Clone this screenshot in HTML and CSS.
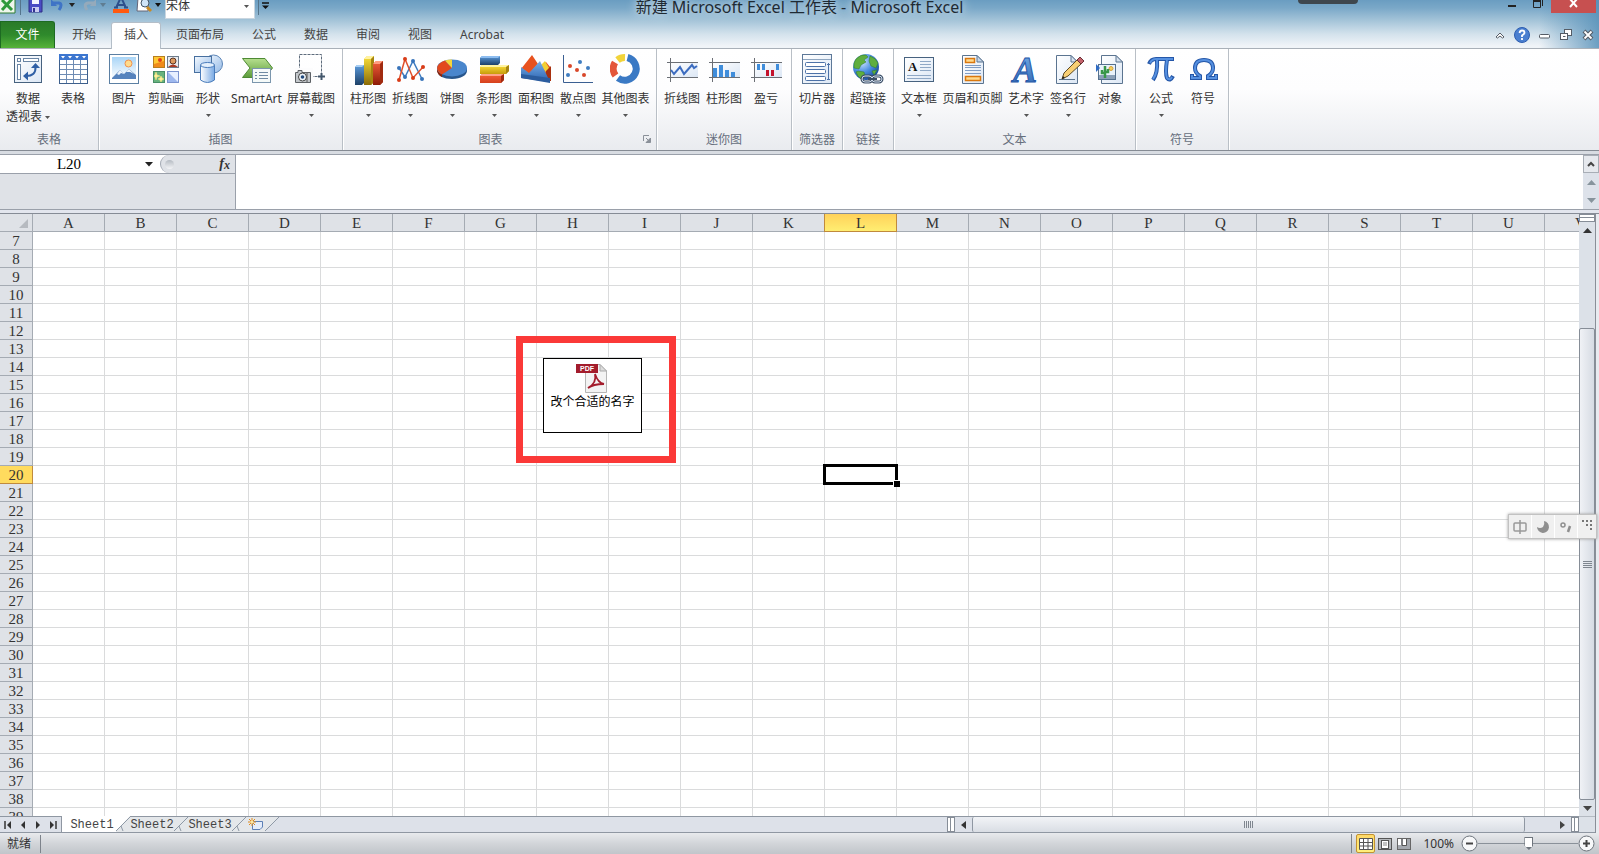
FILE: index.html
```html
<!DOCTYPE html>
<html lang="zh-CN">
<head>
<meta charset="utf-8">
<title>新建 Microsoft Excel 工作表 - Microsoft Excel</title>
<link rel="stylesheet" href="styles.css">
</head>
<body>
<svg class="defs" aria-hidden="true">
  <defs>
    <linearGradient id="gBlue" x1="0" y1="0" x2="0" y2="1"><stop offset="0" stop-color="#79b0ea"/><stop offset="1" stop-color="#2a62ae"/></linearGradient>
    <linearGradient id="gBlueBar" x1="0" y1="0" x2="0" y2="1"><stop offset="0" stop-color="#5c9bdc"/><stop offset="1" stop-color="#1d4067"/></linearGradient>
    <linearGradient id="gYellow" x1="0" y1="0" x2="0" y2="1"><stop offset="0" stop-color="#fbe13c"/><stop offset="1" stop-color="#8a6a06"/></linearGradient>
    <linearGradient id="gRed" x1="0" y1="0" x2="0" y2="1"><stop offset="0" stop-color="#f4603c"/><stop offset="1" stop-color="#8c1a06"/></linearGradient>
    <linearGradient id="gYellowH" x1="0" y1="0" x2="0" y2="1"><stop offset="0" stop-color="#fbe13c"/><stop offset="1" stop-color="#c79c0c"/></linearGradient>
    <linearGradient id="gRedH" x1="0" y1="0" x2="0" y2="1"><stop offset="0" stop-color="#f4603c"/><stop offset="1" stop-color="#d5401c"/></linearGradient>
    <linearGradient id="gPaper" x1="0" y1="0" x2="1" y2="1"><stop offset="0" stop-color="#ffffff"/><stop offset="1" stop-color="#dce7f5"/></linearGradient>
    <linearGradient id="gSky" x1="0" y1="0" x2="0" y2="1"><stop offset="0" stop-color="#a9d5f7"/><stop offset="1" stop-color="#ffffff"/></linearGradient>
    <linearGradient id="gShape" x1="0" y1="0" x2="1" y2="1"><stop offset="0" stop-color="#f5faff"/><stop offset="1" stop-color="#93b9e6"/></linearGradient>
    <linearGradient id="gCyl" x1="0" y1="0" x2="1" y2="0"><stop offset="0" stop-color="#ffffff"/><stop offset="1" stop-color="#78a9e4"/></linearGradient>
    <linearGradient id="gGreen" x1="0" y1="0" x2="0" y2="1"><stop offset="0" stop-color="#b6df8e"/><stop offset="1" stop-color="#5c9c3a"/></linearGradient>
    <radialGradient id="gGlobe" cx=".35" cy=".3" r=".8"><stop offset="0" stop-color="#cfe6ff"/><stop offset=".5" stop-color="#4b8ee0"/><stop offset="1" stop-color="#123f8f"/></radialGradient>
  </defs>
</svg>

<header class="chrome">
  <div class="titlebar">
    <div class="qat">
      <svg width="17" height="20"><path d="M-1-2H15V13H-1z" fill="#eef6ec" stroke="#2e7d32"/><path d="M2 0L12 10M12-1L2 10" stroke="#2f9a3b" stroke-width="3"/></svg>
      <i class="qat-sep"></i>
      <button class="qb save" aria-label="保存"><svg width="16" height="16"><path d="M1-2H14V12H1z" fill="#4a4cc4" stroke="#2e2f86"/><path d="M4-2H11V4H4z" fill="#f4f6ff"/><path d="M4 7H11V12H4z" fill="#c9ccf2"/><path d="M5 8H7V12H5z" fill="#33348f"/></svg></button>
      <button class="qb undo" aria-label="撤消"><svg width="14" height="16"><path d="M2 3H8Q12 4 8 10" fill="none" stroke="#3f74c6" stroke-width="3"/><path d="M0-1V6H6z" fill="#3f74c6"/></svg></button>
      <svg class="tri" width="6" height="4"><path d="M0 0H6L3 4z" fill="#222"/></svg>
      <button class="qb redo" aria-label="恢复"><svg width="14" height="16"><path d="M12 3H6Q1 4 5 10" fill="none" stroke="#95aabb" stroke-width="3"/><path d="M14-1V6H8z" fill="#95aabb"/></svg></button>
      <svg class="tri" width="6" height="4"><path d="M0 0H6L3 4z" fill="#5f7d92"/></svg>
      <button class="qb color" aria-label="字体颜色"><svg width="18" height="16"><path d="M4 8L9-3L14 8M6 5H12M2 7.500H6M12 7.500H16" fill="none" stroke="#2d4f8c" stroke-width="2"/><path d="M1 9H17V13H1z" fill="#ff5a10"/></svg></button>
      <button class="qb preview" aria-label="打印预览"><svg width="18" height="16"><path d="M2-2H12V11H1z" fill="#fff" stroke="#667"/><circle cx="9" cy="3" r="4" fill="#cfe4f7" stroke="#456"/><path d="M11 7L15 11" stroke="#c98a22" stroke-width="3"/></svg></button>
      <svg class="tri" width="6" height="4"><path d="M0 0H6L3 4z" fill="#111"/></svg>
      <label class="fontbox"><select aria-label="字体"><option>宋体</option></select><svg width="5" height="3"><path d="M0 0H5L2.500 3z" fill="#555"/></svg></label>
      <i class="qat-sep"></i>
      <button class="qb" aria-label="自定义快速访问工具栏"><svg width="8" height="16"><path d="M0 3H7" stroke="#111" stroke-width="1.500"/><path d="M0 5.500H7L3.500 9z" fill="#111"/></svg></button>
    </div>
    <h1 class="title">新建 Microsoft Excel 工作表 - Microsoft Excel</h1>
    <div class="winctl">
      <i class="dock"></i>
      <button class="wc" aria-label="最小化"><svg width="26" height="13"><path d="M9 6H17" stroke="#222" stroke-width="2"/></svg></button>
      <button class="wc" aria-label="还原"><svg width="26" height="13"><path d="M8.500 1H15.500V7.500H8.500zM17.500 0V6" fill="none" stroke="#222"/><path d="M8 1H16" stroke="#222" stroke-width="2"/></svg></button>
      <button class="wc close" aria-label="关闭"><svg width="45" height="13"><path d="M19-1L26 7M26-1L19 7" stroke="#fff" stroke-width="2"/></svg></button>
    </div>
  </div>
  <nav class="tabs">
    <button class="file">文件</button>
    <button class="tab">开始</button>
    <button class="tab active">插入</button>
    <button class="tab">页面布局</button>
    <button class="tab">公式</button>
    <button class="tab">数据</button>
    <button class="tab">审阅</button>
    <button class="tab">视图</button>
    <button class="tab">Acrobat</button>
    <div class="docctl">
      <button aria-label="功能区最小化"><svg width="22" height="22"><path d="M7 13L11 9L15 13L13.500 14L11 12L8.500 14z" fill="#fff" stroke="#555c66"/></svg></button>
      <button aria-label="帮助"><svg width="22" height="22"><circle cx="11" cy="11" r="7.500" fill="#4a7fd0" stroke="#2c5db0"/><path d="M8.500 9Q9 6.500 11 6.500Q13.500 6.500 13.500 8.800Q13.500 10 11 11.500V13M11 14V16" fill="none" stroke="#fff" stroke-width="1.800"/></svg></button>
      <button aria-label="最小化窗口"><svg width="22" height="22"><rect x="6.500" y="10.500" width="10" height="3.500" rx="1" fill="#fff" stroke="#555c66"/></svg></button>
      <button aria-label="还原窗口"><svg width="22" height="22"><rect x="9.500" y="5.500" width="7" height="6" fill="#fff" stroke="#555c66"/><rect x="5.500" y="9.500" width="7" height="6" fill="#fff" stroke="#555c66"/><path d="M8 12.500H10.500" stroke="#555c66"/></svg></button>
      <button aria-label="关闭窗口"><svg width="22" height="22"><path d="M7 7L15 15M15 7L7 15" stroke="#555c66" stroke-width="4"/><path d="M7.500 7.500L14.500 14.500M14.500 7.500L7.500 14.500" stroke="#fff" stroke-width="1.800"/></svg></button>
    </div>
  </nav>
</header>

<section class="ribbon">
  <div class="group">
    <div class="items">
      <button class="rb w48"><svg width="32" height="32"><rect x="2.500" y="2.500" width="27" height="27" fill="url(#gPaper)" stroke="#47627f"/><rect x="5.500" y="5.500" width="3" height="3" fill="#fff" stroke="#6884a4"/><rect x="11.500" y="5.500" width="15" height="3" fill="#fff" stroke="#6884a4"/><rect x="5.500" y="11.500" width="3" height="15" fill="#fff" stroke="#6884a4"/><path d="M14 23Q24 23 23.500 14" fill="none" stroke="#2f5fa5" stroke-width="2"/><path d="M23.500 10L28 15H19zM11 23L16 18.500V27.500z" fill="#2f5fa5"/></svg><span>数据<br>透视表 <svg class="car" width="5" height="3"><path d="M0 0H5L2.500 3z" fill="#555"/></svg></span></button>
      <button class="rb"><svg width="32" height="32"><rect x="2.500" y="1.500" width="28" height="29" fill="#fff" stroke="#3d5f8c"/><path d="M2 1H31V7H2z" fill="#3c76cf"/><path d="M4 3H8L6 5.500zM11 3H15L13 5.500zM18 3H22L20 5.500zM25 3H29L27 5.500z" fill="#fff"/><path d="M9.500 7V30M16.500 7V30M23.500 7V30M3 11.500H30M3 16.500H30M3 21.500H30M3 26.500H30" stroke="#6e8cb3"/></svg><span>表格</span></button>
    </div>
    <div class="glabel">表格</div>
  </div>
  <div class="group">
    <div class="items">
      <button class="rb"><svg width="32" height="32"><rect x="1.500" y="1.500" width="29" height="29" fill="#fff" stroke="#5b7fa3"/><rect x="4" y="4" width="24" height="22" fill="url(#gSky)"/><circle cx="20.500" cy="10.500" r="3.500" fill="#ffdb8c" stroke="#f0914e"/><path d="M4 25L12 17L16 21L21 16L28 22V26H4z" fill="#5683bd"/><path d="M9 21L12 17L16 21L13 20L11 22zM18 19L21 16L26 21L22 19z" fill="#eef4fb"/></svg><span>图片</span></button>
      <button class="rb"><svg width="32" height="32"><rect x="3.500" y="3.500" width="11" height="11" fill="#ffc933" stroke="#b87e1e"/><path d="M4 11L14 8V14H4z" fill="#f08a1a"/><circle cx="10" cy="7" r="2" fill="#e2401c"/><rect x="17.500" y="3.500" width="11" height="11" fill="#e9ecf0" stroke="#6d7c8c"/><circle cx="23" cy="8" r="3" fill="#dd9a5f" stroke="#5a3524"/><path d="M18 14Q23 9 28 14z" fill="#a83a24"/><rect x="3.500" y="18.500" width="11" height="11" fill="#67b27e" stroke="#478e66"/><path d="M6 19L7 22L10 23L7 24L6 27L5 24L4 23L5 22zM11 23L12 25L14 26L12 27L11 29L10 27L8 26L10 25z" fill="#fff099" stroke="#ffe97a" stroke-width=".5"/><rect x="17.500" y="18.500" width="11" height="11" fill="#e7efff" stroke="#7b93cf"/><path d="M18 19L28 29H18z" fill="#9db7ee"/></svg><span>剪贴画</span></button>
      <button class="rb"><svg width="32" height="32"><circle cx="21.500" cy="11" r="9" fill="url(#gShape)" stroke="#5c85b7"/><rect x="2.500" y="3.500" width="17" height="16" fill="url(#gShape)" stroke="#476f9f"/><path d="M8.500 12V27Q15.500 32 22.500 27V12" fill="url(#gCyl)" stroke="#4a7cbb"/><ellipse cx="15.500" cy="12" rx="7" ry="2.500" fill="#e3effc" stroke="#4a7cbb"/></svg><span>形状</span><svg class="car" width="5" height="3"><path d="M0 0H5L2.500 3z" fill="#555"/></svg></button>
      <button class="rb w55"><svg width="32" height="32"><path d="M1.500 5.500H24L31.500 15L24 24.500H1.500L9 15z" fill="url(#gGreen)" stroke="#4e8a34"/><rect x="11.500" y="15.500" width="18" height="14" fill="#f5faf9" stroke="#7b96ad"/><path d="M14 19.500H16M18 19.500H27M14 22.500H16M18 22.500H27M14 25.500H16M18 25.500H27" stroke="#6f8ba3"/></svg><span>SmartArt</span></button>
      <button class="rb w54"><svg width="32" height="32"><rect x="4.500" y="1.500" width="22" height="22" fill="none" stroke="#5e6c7c" stroke-dasharray="3 1"/><rect x="0" y="15" width="18" height="17" fill="#fcfcfd"/><path d="M26.500 20V27M23 23.500H30" stroke="#43566b" stroke-width="2"/><path d="M.5 19.500H3V17.500H7V19.500H15.500V29.500H.5z" fill="#c3c7cb" stroke="#5c6065"/><circle cx="7.500" cy="24" r="4" fill="#eef4fa" stroke="#444"/><circle cx="7.500" cy="24" r="1.800" fill="#224a7c"/><path d="M12 20V29" stroke="#555"/></svg><span>屏幕截图</span><svg class="car" width="5" height="3"><path d="M0 0H5L2.500 3z" fill="#555"/></svg></button>
    </div>
    <div class="glabel">插图</div>
  </div>
  <div class="group">
    <div class="items">
      <button class="rb"><svg width="32" height="32"><path d="M3 14L5 12H12V30L10 32H3z" fill="url(#gBlueBar)"/><path d="M3 14L5 12H12L10 14z" fill="#a6cdf3"/><path d="M12 6L15 3H22V29L19 32H12z" fill="url(#gYellow)"/><path d="M12 6L15 3H22L19 6z" fill="#fff2a0"/><path d="M19 6L22 3V29L19 32z" fill="#a58410"/><path d="M21 11L24 8H31V29L28 32H21z" fill="url(#gRed)"/><path d="M21 11L24 8H31L28 11z" fill="#ff9d80"/><path d="M28 11L31 8V29L28 32z" fill="#a02a10"/></svg><span>柱形图</span><svg class="car" width="5" height="3"><path d="M0 0H5L2.500 3z" fill="#555"/></svg></button>
      <button class="rb"><svg width="32" height="32"><path d="M5 15L11 24L19 8L28 26" fill="none" stroke="#3f7cc0" stroke-width="1.500"/><path d="M5 27L11 6L19 25L29 14" fill="none" stroke="#e0502c" stroke-width="1.500"/><g fill="#3773ba"><circle cx="5" cy="15" r="2"/><circle cx="11" cy="24" r="2"/><circle cx="19" cy="8" r="2"/><circle cx="28" cy="26" r="2"/></g><g fill="#d83c18"><circle cx="5" cy="27" r="2"/><circle cx="11" cy="6" r="2"/><circle cx="19" cy="25" r="2"/><circle cx="29" cy="14" r="2"/></g></svg><span>折线图</span><svg class="car" width="5" height="3"><path d="M0 0H5L2.500 3z" fill="#555"/></svg></button>
      <button class="rb"><svg width="32" height="32"><path d="M1 15V18Q3 26 16 26Q30 25 31 18V15z" fill="#28568c"/><path d="M1 15V18Q2 22 6 24V20z" fill="#8f2308"/><ellipse cx="16" cy="15" rx="15" ry="8.500" fill="#4a86cc"/><path d="M16 15L6 21.500Q-2 16 3 11Q6 8 9 7.500z" fill="#e2491d"/><path d="M16 15L9 7.500Q12 6.500 16 6.500z" fill="#f5d63a"/></svg><span>饼图</span><svg class="car" width="5" height="3"><path d="M0 0H5L2.500 3z" fill="#555"/></svg></button>
      <button class="rb"><svg width="32" height="32"><path d="M2 5L4 3H22V10L20 12H2z" fill="url(#gBlueBar)"/><path d="M2 5L4 3H22L20 5z" fill="#8dbdf0"/><path d="M2 14L4 12H31V18L28 21H2z" fill="url(#gYellowH)"/><path d="M2 14L4 12H31L28 14z" fill="#fff3a2"/><path d="M28 14L31 12V18L28 21z" fill="#a58410"/><path d="M2 23L4 21H26V27L23 30H2z" fill="url(#gRedH)"/><path d="M2 23L4 21H26L23 23z" fill="#ffa488"/><path d="M23 23L26 21V27L23 30z" fill="#a02a10"/></svg><span>条形图</span><svg class="car" width="5" height="3"><path d="M0 0H5L2.500 3z" fill="#555"/></svg></button>
      <button class="rb"><svg width="32" height="32"><path d="M1 16L12 2L20 14L26 9L31 15V27L1 25z" fill="#e8521f"/><path d="M20 13L25 8L29 15L27 20z" fill="#f2cf34"/><path d="M26 18L31 13V28H26z" fill="#a8300f"/><path d="M1 14L9 20L20 8L30 29L1 25z" fill="url(#gBlue)"/><path d="M30 25V30L1 25V21z" fill="#2b5c9e"/></svg><span>面积图</span><svg class="car" width="5" height="3"><path d="M0 0H5L2.500 3z" fill="#555"/></svg></button>
      <button class="rb"><svg width="32" height="32"><path d="M1.500 2V29.500H31" fill="none" stroke="#3a5f92"/><g fill="#d8472a"><circle cx="8" cy="13" r="2"/><circle cx="15" cy="17" r="2"/><circle cx="22" cy="22" r="2"/></g><g fill="#3f7cc0"><circle cx="18" cy="9" r="2"/><circle cx="26" cy="15" r="2"/><circle cx="6" cy="22" r="2"/></g></svg><span>散点图</span><svg class="car" width="5" height="3"><path d="M0 0H5L2.500 3z" fill="#555"/></svg></button>
      <button class="rb w53"><svg width="32" height="32"><g fill="none" stroke-width="7"><path d="M17.500 4.500A11.500 11.500 0 1 1 8 25" stroke="#3a79c4"/><path d="M5.500 22.500A11.500 11.500 0 0 1 5 9.500" stroke="#e4573a"/><path d="M7.500 7A11.500 11.500 0 0 1 15 4.500" stroke="#f2d43a"/></g></svg><span>其他图表</span><svg class="car" width="5" height="3"><path d="M0 0H5L2.500 3z" fill="#555"/></svg></button>
    </div>
    <div class="glabel haslaunch">图表</div>
    <button class="launch" aria-label="图表对话框"><svg width="8" height="8"><path d="M.5 6V.5H6" fill="none" stroke="#8a9099"/><path d="M3 3L5 5" stroke="#8a9099"/><path d="M7.500 3V7.500H3zM7 4L4 7z" fill="#8a9099" stroke="#8a9099"/></svg></button>
  </div>
  <div class="group">
    <div class="items">
      <button class="rb"><svg width="32" height="32"><rect x="5" y="9" width="27" height="15" fill="url(#gPaper)"/><path d="M1 9.500H32M1 24.500H32M4.500 5V29" stroke="#6b6f75"/><path d="M5 17L8 21L14 14L18 21L26 12L28 15L31 13" fill="none" stroke="#3c6cc0" stroke-width="2"/></svg><span>折线图</span></button>
      <button class="rb"><svg width="32" height="32"><rect x="5" y="9" width="27" height="15" fill="url(#gPaper)"/><path d="M1 9.500H32M4.500 5V29" stroke="#6b6f75"/><path d="M5 15H9V24H5zM11 12H15V24H11zM17 17H21V24H17zM23 19H27V24H23z" fill="#3f8ddb"/><path d="M1 24.500H32" stroke="#6b6f75"/></svg><span>柱形图</span></button>
      <button class="rb"><svg width="32" height="32"><rect x="5" y="9" width="27" height="15" fill="url(#gPaper)"/><path d="M1 9.500H32M1 24.500H32M4.500 5V29" stroke="#6b6f75"/><path d="M7 11H10V17H7zM12 11H15V17H12zM26 11H29V17H26z" fill="#3f8ddb"/><path d="M16 17H19V23H16zM21 17H24V23H21z" fill="#c4122c"/></svg><span>盈亏</span></button>
    </div>
    <div class="glabel">迷你图</div>
  </div>
  <div class="group">
    <div class="items">
      <button class="rb"><svg width="32" height="32"><rect x="1.500" y="1.500" width="29" height="29" fill="url(#gPaper)" stroke="#5d7898"/><path d="M2 6.500H30" stroke="#8ea5bf"/><g fill="#fff" stroke="#4d72a8"><rect x="4.500" y="9.500" width="20" height="4" rx="1"/><rect x="4.500" y="16.500" width="20" height="4" rx="1"/><rect x="4.500" y="23.500" width="20" height="4" rx="1"/></g><path d="M27.500 10V27M26 11.500H29M26 26.500H29" stroke="#4d72a8"/></svg><span>切片器</span></button>
    </div>
    <div class="glabel">筛选器</div>
  </div>
  <div class="group">
    <div class="items">
      <button class="rb"><svg width="32" height="32"><circle cx="14" cy="14" r="13" fill="url(#gGlobe)"/><path d="M4 6Q9 1 14 2L16 4L12 7L14 9L9 12L7 16L2 15Q1 10 4 6zM18 3Q24 5 26 10L24 15L19 13L17 8zM6 18L12 19L13 23L9 26Q5 23 4 19zM20 18L25 17L22 22z" fill="#5fae3e" stroke="#2f7a2a" stroke-width=".5"/><rect x="10" y="23" width="10" height="6" rx="3" fill="none" stroke="#3d4f66" stroke-width="3"/><rect x="20" y="23" width="10" height="6" rx="3" fill="none" stroke="#3d4f66" stroke-width="3"/><rect x="10" y="23" width="10" height="6" rx="3" fill="none" stroke="#cfdced"/><rect x="20" y="23" width="10" height="6" rx="3" fill="none" stroke="#cfdced"/><path d="M16 26H25" stroke="#3d4f66" stroke-width="2"/></svg><span>超链接</span></button>
    </div>
    <div class="glabel">链接</div>
  </div>
  <div class="group">
    <div class="items">
      <button class="rb"><svg width="32" height="32"><rect x="1.500" y="4.500" width="29" height="24" fill="url(#gPaper)" stroke="#47627f"/><text class="ga" x="5" y="18">A</text><path d="M17 8.500H28M17 11.500H28M17 14.500H28M17 17.500H28M4 22.500H28M4 25.500H28" stroke="#8fa8c6"/></svg><span>文本框</span><svg class="car" width="5" height="3"><path d="M0 0H5L2.500 3z" fill="#555"/></svg></button>
      <button class="rb w65"><svg width="32" height="32"><path d="M5.500 2.500H20L26.500 9V30.500H5.500z" fill="url(#gPaper)" stroke="#5b7490"/><path d="M20 2.500V9H26.500z" fill="#c6d6e8" stroke="#5b7490"/><rect x="8.500" y="5.500" width="9" height="4" fill="#ffd98c" stroke="#d9770e" stroke-width="1.500"/><rect x="8.500" y="23.500" width="15" height="4" fill="#ffd98c" stroke="#d9770e" stroke-width="1.500"/><path d="M8 12.500H24M8 14.500H24M8 17.500H24M8 20.500H24" stroke="#7f9cc4"/></svg><span>页眉和页脚</span></button>
      <button class="rb"><svg class="wordart" width="32" height="32"><text class="gw" x="3" y="29">A</text></svg><span>艺术字</span><svg class="car" width="5" height="3"><path d="M0 0H5L2.500 3z" fill="#555"/></svg></button>
      <button class="rb"><svg width="32" height="32"><path d="M4.500 2.500H19L25.500 9V30.500H4.500z" fill="url(#gPaper)" stroke="#5b7490"/><path d="M19 2.500V9H25.500z" fill="#d6e1ee" stroke="#5b7490"/><path d="M7 26.500H23" stroke="#5b7490"/><path d="M10 26L12 20L25 7L29 11L16 23z" fill="#f8cf74" stroke="#5d4a24"/><path d="M25 7L28 4L32 8L29 11z" fill="#c4636c" stroke="#6a2f36"/><path d="M10 26L11 23L13 25z" fill="#222"/></svg><span>签名行</span><svg class="car" width="5" height="3"><path d="M0 0H5L2.500 3z" fill="#555"/></svg></button>
      <button class="rb"><svg width="32" height="32"><path d="M7.500 2.500H22L28.500 9V30.500H7.500z" fill="url(#gPaper)" stroke="#5b7490"/><path d="M22 2.500V9H28.500z" fill="#d6e1ee" stroke="#5b7490"/><rect x="4.500" y="11.500" width="17" height="15" fill="#e9f2fb" stroke="#55708e"/><path d="M5 22H21V26H5z" fill="#8ba0b8"/><circle cx="17" cy="15.500" r="2" fill="#f3cf5c" stroke="#d5a13a"/><path d="M11 13V25M8 17V20H11M14 16V19H11" fill="none" stroke="#39974a" stroke-width="2.500"/><path d="M2 11L6 15L2 19z" fill="#2f6bc4"/></svg><span>对象</span></button>
    </div>
    <div class="glabel">文本</div>
  </div>
  <div class="group">
    <div class="items">
      <button class="rb"><svg width="32" height="32"><g fill="none" stroke="#2557a8"><path d="M4 11Q6 6 11 6H29" stroke-width="4"/><path d="M12 7Q13 20 8 27" stroke-width="4"/><path d="M22 7Q20 20 22 25Q25 29 28 23" stroke-width="4"/></g><g fill="none" stroke="#5590e0"><path d="M5 10Q7 6 11 6H28" stroke-width="2"/><path d="M12 7Q13 20 8 26" stroke-width="2"/><path d="M22 7Q20 20 22 25Q25 28 27 24" stroke-width="2"/></g></svg><span>公式</span><svg class="car" width="5" height="3"><path d="M0 0H5L2.500 3z" fill="#555"/></svg></button>
      <button class="rb"><svg width="32" height="32"><path d="M5 21V25H13V23Q8 20 8 15Q8 7 17 7Q26 7 26 15Q26 20 21 23V25H29V21" fill="none" stroke="#2557a8" stroke-width="4"/><path d="M5 22V25H13V23Q8 20 8 15Q8 7 17 7Q26 7 26 15Q26 20 21 23V25H29V22" fill="none" stroke="#5590e0" stroke-width="2"/></svg><span>符号</span></button>
    </div>
    <div class="glabel">符号</div>
  </div>
</section>

<section class="formula">
  <div class="fleft">
    <div class="frow">
      <input class="namebox" aria-label="名称框" value="L20">
      <svg class="namearrow" width="8" height="5"><path d="M0 0H8L4 4.500z" fill="#222"/></svg>
      <div class="fxpart"><i class="knob"></i><button class="fx" aria-label="插入函数"><i>f<sub>x</sub></i></button></div>
    </div>
  </div>
  <textarea class="finput" aria-label="编辑栏"></textarea>
  <div class="fscroll">
    <button class="fexp" aria-label="展开编辑栏"><svg width="8" height="6"><path d="M1 5L4 2L7 5" fill="none" stroke="#444" stroke-width="2"/></svg></button>
    <button aria-label="上移"><svg width="9" height="5"><path d="M0 5L4.500 0L9 5z" fill="#87949c"/></svg></button>
    <button aria-label="下移"><svg width="9" height="5"><path d="M0 0L4.500 5L9 0z" fill="#87949c"/></svg></button>
  </div>
</section>

<main class="work">
  <div class="pane">
    <div class="sheet" id="sheet">
      <table class="grid" id="grid"></table>
      <div class="mark"></div>
      <div class="obj">
        <svg width="32" height="30"><path d="M10.500 1.500H25L31.500 8V29.500H10.500z" fill="#f3f3f3" stroke="#b5b5b5"/><path d="M25 1.500V8H31.500z" fill="#dcdcdc" stroke="#aaa"/><path d="M1 1H23V10H1z" fill="#a31c2c"/><text class="pdf" x="5" y="8">PDF</text><path d="M20 11Q22 20 13 25Q18 21 29 21Q23 20 20 11z" fill="none" stroke="#a31c2c" stroke-width="1.800"/></svg>
        <span>改个合适的名字</span>
      </div>
    </div>
    <div class="bottom">
      <div class="sheettabs">
        <div class="nav">
          <button aria-label="第一张"><svg width="8" height="8"><path d="M1 0V8" stroke="#333" stroke-width="1.500"/><path d="M7 0V8L3 4z" fill="#333"/></svg></button>
          <button aria-label="上一张"><svg width="8" height="8"><path d="M6 0V8L2 4z" fill="#333"/></svg></button>
          <button aria-label="下一张"><svg width="8" height="8"><path d="M2 0V8L6 4z" fill="#333"/></svg></button>
          <button aria-label="最后一张"><svg width="8" height="8"><path d="M7 0V8" stroke="#333" stroke-width="1.500"/><path d="M1 0V8L5 4z" fill="#333"/></svg></button>
        </div>
        <button class="st on">Sheet1</button>
        <svg class="slash on" width="14" height="16"><path d="M0 0H14L0 15z" fill="#fff"/><path d="M14 1L0 15M5 10L7 15" stroke="#8e99a6" fill="none"/></svg>
        <button class="st">Sheet2</button>
        <svg class="slash" width="14" height="15"><path d="M14 0L0 14M5 9L7 14" stroke="#8e99a6" fill="none"/></svg>
        <button class="st">Sheet3</button>
        <svg class="slash" width="14" height="15"><path d="M14 0L0 14M5 9L7 14" stroke="#8e99a6" fill="none"/></svg>
        <button class="newsheet" aria-label="插入工作表"><svg width="18" height="15"><path d="M5.500 4.500H15.500V10L13 12.500H5.500z" fill="#e4ecfa" stroke="#5c7fb5"/><path d="M5 1V9M1 5H9M2 2L8 8M8 2L2 8" stroke="#e08a1a"/><circle cx="5" cy="5" r="1.500" fill="#ffe9a0"/></svg></button>
        <svg class="slash last" width="14" height="15"><path d="M0 0H14L0 14z" fill="#e4e7ea"/><path d="M14 0L0 14" stroke="#8e99a6"/></svg>
      </div>
      <div class="hscroll">
        <i class="split"></i>
        <button aria-label="向左"><svg width="6" height="8"><path d="M5 0V8L0 4z" fill="#333"/></svg></button>
        <div class="htrack"><div class="hthumb"><i></i></div></div>
        <button aria-label="向右"><svg width="6" height="8"><path d="M0 0V8L5 4z" fill="#444"/></svg></button>
        <i class="split"></i>
      </div>
    </div>
  </div>
  <div class="vscroll">
    <i class="vsplit"></i>
    <button aria-label="向上"><svg width="9" height="5"><path d="M0 5L4.500 0L9 5z" fill="#333"/></svg></button>
    <div class="vtrack"><div class="vthumb"><i></i></div></div>
    <button aria-label="向下"><svg width="9" height="5"><path d="M0 0L4.500 5L9 0z" fill="#444"/></svg></button>
    <div class="corner"></div>
  </div>
</main>

<footer class="status">
  <span class="ready">就绪</span>
  <div class="sright">
    <button class="view on" aria-label="普通"><svg width="14" height="12"><path d="M.5.5H13.500V11.500H.5zM.5 4.500H13.500M.5 8H13.500M4.500.5V11.500M9 .5V11.500" fill="#fff" stroke="#555"/></svg></button>
    <button class="view" aria-label="页面布局"><svg width="14" height="12"><rect x=".5" y=".5" width="13" height="11" fill="#b5b8bc" stroke="#555"/><rect x="3.500" y="2.500" width="7" height="8" fill="#fff" stroke="#555"/><path d="M5 5H9M5 7H9" stroke="#888"/></svg></button>
    <button class="view" aria-label="分页预览"><svg width="14" height="12"><rect x=".5" y=".5" width="13" height="11" fill="#a4a8ae" stroke="#666"/><path d="M1 1H4V7H1zM6 1H9V7H6z" fill="#fff"/><path d="M5 1V7.500H9.500V1" fill="none" stroke="#555"/></svg></button>
    <span class="pct">100%</span>
    <button class="zb" aria-label="缩小"><svg width="17" height="17"><circle cx="8.500" cy="8.500" r="7.500" fill="#f7f8f9" stroke="#6e757d"/><path d="M5 8.500H12" stroke="#444" stroke-width="2"/></svg></button>
    <input class="zoom" type="range" min="0" max="100" value="51" aria-label="显示比例">
    <button class="zb" aria-label="放大"><svg width="17" height="17"><circle cx="8.500" cy="8.500" r="7.500" fill="#f7f8f9" stroke="#6e757d"/><path d="M5 8.500H12M8.500 5V12" stroke="#444" stroke-width="2"/></svg></button>
  </div>
</footer>

<div class="ime">
  <button aria-label="中文"><svg width="14" height="14"><rect x="1" y="3" width="12" height="8" rx="1" fill="none" stroke="#999" stroke-width="1.500"/><path d="M7 0V14" stroke="#999" stroke-width="1.500"/></svg></button>
  <button aria-label="半角"><svg width="14" height="14"><path d="M8 1A6 6 0 1 1 1 7Q4 9 7 7Q9 4 8 1z" fill="#8f8f8f"/></svg></button>
  <button aria-label="标点"><svg width="14" height="14"><circle cx="4" cy="5" r="2" fill="none" stroke="#8f8f8f" stroke-width="1.500"/><path d="M11 6L9 12" stroke="#8f8f8f" stroke-width="2.500"/></svg></button>
  <button class="dots" aria-label="菜单"><svg width="10" height="10"><path d="M0 1H2M4 1H6M8 1H10M4 5H6M8 5H10M8 9H10" stroke="#777" stroke-width="2"/></svg></button>
</div>
<script src="script.js"></script>
</body>
</html>
```
FILE: styles.css
```css
* { box-sizing: border-box; }
body {
  margin: 0;
  height: 100vh;
  display: flex;
  flex-direction: column;
  overflow: hidden;
  font: 12px/18px "Noto Sans", "Noto Sans CJK SC", sans-serif;
  color: #333;
  background: #dde1e6;
}
button, input, select, textarea { font: inherit; color: inherit; margin: 0; padding: 0; border: 0; background: none; }
button { display: flex; align-items: center; justify-content: center; }
svg { display: block; flex: none; }
.defs { position: absolute; width: 0; height: 0; }

/* title bar and tabs */
.chrome {
  flex: none;
  background:
    linear-gradient(90deg, transparent calc(100% - 60px), rgba(86, 144, 184, .85)),
    linear-gradient(#6a9dc1, #7aa8c8 8px, #a3c3d8 20px, #d3e2ec 34px, #f0f4f8 46px);
  border-bottom: 1px solid #a9b0b8;
}
.titlebar { display: grid; grid-template-columns: 1fr auto 1fr; height: 21px; align-items: start; }
.qat { display: flex; height: 19px; align-items: flex-start; }
.qat-sep { width: 1px; height: 15px; margin: 0 3px; background: #55758c; }
.qb { height: 16px; }
.save { margin-left: 4px; }
.undo { margin: 0 4px 0 7px; }
.redo { margin: 0 4px 0 7px; }
.color { margin-left: 6px; }
.preview { margin: 0 1px 0 6px; }
.tri { margin-top: 3px; }
.fontbox { display: flex; align-items: center; width: 90px; height: 19px; margin: 0 0 0 4px; padding-right: 5px; background: #fff; border: 1px solid #c9d6e0; border-top: 0; }
.fontbox select { flex: 1; appearance: none; height: 12px; line-height: 12px; margin-bottom: 6px; outline: 0; }
.fontbox svg { margin-bottom: 6px; }
.title { margin: 0; font-size: 16px; line-height: 14px; font-weight: 400; color: #1f2a33; text-shadow: 0 0 8px #cfe0ec, 0 0 12px #cfe0ec; }
.winctl { display: flex; justify-content: flex-end; padding-right: 3px; }
.dock { width: 60px; height: 4px; margin-right: 141px; background: #3e474e; border-radius: 0 0 4px 4px; }
.wc.close { background: #c75050; }
.tabs { display: flex; height: 27px; align-items: stretch; }
.file { width: 55px; margin-right: 3px; color: #fff; background: linear-gradient(#2a7a28, #2f8a2c 50%, #56b33a); border: 1px solid #1d6a22; border-bottom: 0; border-radius: 0 3px 0 0; }
.tab { padding: 0 14px; color: #444; }
.tab.active { margin: 1px 1px -1px; padding: 0 12px 2px; background: #fff; border: 1px solid #b4bec8; border-bottom: 0; border-radius: 3px 3px 0 0; }
.docctl { display: flex; align-items: center; margin-left: auto; }

/* ribbon */
.ribbon { flex: none; display: flex; height: 102px; background: linear-gradient(#fff, #fdfdfe 40%, #e9ebef); border-bottom: 1px solid #858b94; }
.group { position: relative; display: flex; flex-direction: column; justify-content: space-between; padding: 0 4px; border-right: 1px solid #b9bfc6; box-shadow: 1px 0 #fff; }
.items { display: flex; }
.rb { flex-direction: column; justify-content: flex-start; width: 42px; padding-top: 4px; white-space: nowrap; }
.rb span { margin-top: 5px; }
.rb .car { margin-top: 6px; }
.rb span .car { display: inline-block; margin: 0; vertical-align: middle; }
.w48 { width: 48px; }
.w53 { width: 53px; }
.w54 { width: 54px; }
.w55 { width: 55px; }
.w65 { width: 65px; }
.glabel { padding-bottom: 1px; text-align: center; color: #666e7c; }
.haslaunch { padding-right: 18px; }
.launch { position: absolute; right: 5px; bottom: 7px; }
.ga { font: bold 13px "Liberation Serif", serif; fill: #111; }
.gw { font: italic bold 36px "Liberation Serif", serif; fill: url(#gBlue); stroke: #2557a8; stroke-width: 1px; }
.wordart { overflow: visible; }

/* formula bar */
.formula { flex: none; display: flex; height: 62px; border-top: 3px solid #d8dce2; background: #fff; border-bottom: 3px solid #e3e6ee; }
.fleft { flex: none; width: 236px; background: #dfe2e7; border: 1px solid #9aa0aa; border-left: 0; }
.frow { display: flex; align-items: center; height: 19px; background: #fff; border-bottom: 1px solid #9aa0aa; }
.namebox { width: 138px; font: 15px/18px "Liberation Serif", serif; text-align: center; color: #000; }
.namearrow { margin: 0 7px; }
.fxpart { flex: 1; display: flex; align-items: center; justify-content: space-between; height: 18px; padding: 0 5px 0 4px; background: #dfe2e7; border-left: 1px solid #a2a8b2; border-radius: 9px 0 0 9px; }
.knob { width: 9px; height: 9px; border-radius: 5px; background: linear-gradient(#b4bac2, #f4f5f7); }
.fx { height: 16px; font: bold 14px/14px "Liberation Serif", serif; }
.fx sub { font-size: 12px; line-height: 8px; vertical-align: -1px; }
.finput { flex: 1; resize: none; border-top: 1px solid #9aa0aa; border-bottom: 1px solid #9aa0aa; }
.fscroll { display: flex; flex-direction: column; width: 16px; background: #dde2ea; border-top: 1px solid #9aa0aa; border-bottom: 1px solid #9aa0aa; }
.fscroll button { flex: 1; }
.fscroll .fexp { flex: none; height: 18px; border: 1px solid #a8aeb6; background: #e6e9ee; }

/* worksheet */
.work { flex: 1; min-height: 0; display: flex; padding-right: 3px; background: #e8ebf0; border-top: 1px solid #868c96; }
.pane { flex: 1; min-width: 0; display: flex; flex-direction: column; }
.sheet { flex: 1; min-height: 0; position: relative; overflow: hidden; background: #fff; }
.grid { table-layout: fixed; border-collapse: separate; border-spacing: 0; font: 15px/15px "Liberation Serif", serif; color: #333; }
.grid th, .grid td { width: 72px; height: 18px; padding: 2px 0 0; border-right: 1px solid #dadbdc; border-bottom: 1px solid #dadbdc; font-weight: 400; }
.grid th { background: #dfe2e7; border-color: #a5abb3; text-align: center; }
.grid .rh { width: 33px; }
.grid thead .on { background: linear-gradient(#ffd15a, #ffee72); border-color: #c08a3c; box-shadow: -1px 0 #c08a3c; }
.grid .rh.on { background: #ffdb5e; border-color: #c08a3c; }
.all { position: relative; }
.all::after { content: ""; position: absolute; right: 4px; bottom: 3px; border-left: 9px solid transparent; border-bottom: 9px solid #b6bac0; }
.sel { position: relative; }
.sel::before { content: ""; position: absolute; z-index: 1; inset: -2px; border: 3px solid #000; }
.sel::after { content: ""; position: absolute; z-index: 2; right: -4px; bottom: -4px; width: 6px; height: 6px; background: #000; border-top: 1px solid #fff; border-left: 1px solid #fff; }
.mark { position: absolute; left: 516px; top: 122px; width: 160px; height: 127px; border: 7px solid #fb3938; }
.obj { position: absolute; left: 543px; top: 144px; width: 99px; height: 75px; padding-top: 4px; display: flex; flex-direction: column; align-items: center; background: #fff; border: 1px solid #000; color: #000; line-height: 14px; }
.obj svg { margin: 0 4px 2px 0; }
.obj span { white-space: nowrap; }
.pdf { font: bold 7px "Liberation Sans", sans-serif; fill: #fff; }

/* sheet tabs and horizontal scroll */
.bottom { flex: none; display: flex; height: 17px; background: #dde1e9; border-top: 1px solid #8f97a2; border-bottom: 1px solid #8f97a2; }
.sheettabs { flex: 3; display: flex; }
.nav { display: flex; justify-content: space-around; width: 62px; border-right: 1px solid #8f97a2; padding: 0 1px; }
.st { width: 44px; padding-top: 2px; font: 12px/13px "Liberation Mono", monospace; color: #444; background: #e4e7ea; }
.st.on { width: 54px; padding-left: 6px; margin-top: -1px; background: #fff; }
.slash { background: #e4e7ea; }
.slash.on { margin-top: -1px; }
.slash.last { background: none; }
.newsheet { width: 19px; background: #e4e7ea; }
.hscroll { flex: 2; display: flex; }
.hscroll button { width: 17px; }
.split { flex: none; width: 8px; border: 1px solid #868d97; background: linear-gradient(90deg, #fff 2px, #868d97 2px, #868d97 3px, #fff 3px); }
.htrack { flex: 1; padding-right: 29px; }
.hthumb { display: flex; align-items: center; justify-content: center; height: 15px; background: linear-gradient(#f2f4f7, #d9dde4); border: 1px solid #8f97a2; border-top: 0; border-bottom: 0; border-radius: 2px; }
.hthumb i { width: 9px; height: 7px; background: repeating-linear-gradient(90deg, #7f868f 0 1px, transparent 1px 2px); }

/* vertical scroll */
.vscroll { flex: none; display: flex; flex-direction: column; width: 17px; background: #dce1e8; border-right: 1px solid #8a8f98; }
.vsplit { height: 8px; border: 1px solid #868d97; background: linear-gradient(#fff 2px, #868d97 2px, #868d97 3px, #fff 3px); }
.vscroll button { height: 16px; }
.vtrack { flex: 1; display: flex; padding-top: 90px; }
.vthumb { flex: 1; display: flex; align-items: center; justify-content: center; background: linear-gradient(90deg, #f0f2f6, #d6dbe3); border: 1px solid #868d97; border-radius: 2px; }
.vthumb i { width: 9px; height: 7px; background: repeating-linear-gradient(#7f868f 0 1px, transparent 1px 2px); }
.corner { height: 17px; border-top: 1px solid #b4bac2; border-bottom: 1px solid #8f97a2; }

/* status bar */
.status { flex: none; display: flex; align-items: center; justify-content: space-between; height: 21px; padding: 0 4px 0 7px; background: linear-gradient(#e8eaed, #d2d5d9 50%, #c1c5ca); }
.ready { padding-right: 9px; border-right: 1px solid #7d838b; }
.sright { display: flex; align-items: center; border-left: 1px solid #7d838b; padding-left: 4px; }
.view { width: 19px; height: 19px; }
.view.on { border: 1px solid #c29232; border-radius: 2px; background: linear-gradient(#ffd968, #fff07c); }
.pct { padding: 0 7px 0 10px; }
.zoom { appearance: none; width: 100px; height: 17px; background: linear-gradient(#8a9199, #8a9199) center / 100% 1px no-repeat; }
.zoom::-webkit-slider-thumb { appearance: none; width: 9px; height: 13px; background: linear-gradient(#fff, #fff) center 1px / 7px 9px no-repeat #6e757d; clip-path: polygon(0 0, 100% 0, 100% 65%, 50% 100%, 0 65%); }

/* input method bar */
.ime { position: fixed; right: 2px; top: 514px; display: flex; width: 89px; height: 25px; background: #f0f0f0; border: 1px solid #c2c2c2; box-shadow: 0 0 3px #999; }
.ime button { width: 23px; border-right: 1px solid #fff; }
.ime .dots { flex: 1; align-items: flex-start; padding-top: 5px; border: 0; }
```
FILE: script.js
```js
const sheet = document.getElementById('sheet');
const grid = document.getElementById('grid');
const FIRST_ROW = 7;
const ROW_H = 18;
const COL_W = 72;
const HEAD_W = 33;
const activeCol = 'L';
const activeRow = 20;

const addHead = (row, text, cls) => {
  const th = document.createElement('th');
  th.textContent = text;
  th.className = cls;
  row.appendChild(th);
};

// Fill the visible area with as many rows and columns as it can show.
function render() {
  const rows = Math.ceil((sheet.clientHeight - ROW_H) / ROW_H);
  const cols = Math.min(26, Math.ceil((sheet.clientWidth - HEAD_W) / COL_W));
  const letters = Array.from({ length: cols }, (_, i) => String.fromCharCode(65 + i));
  grid.textContent = '';
  grid.style.width = HEAD_W + cols * COL_W + 'px';
  const head = grid.createTHead().insertRow();
  addHead(head, '', 'rh all');
  letters.forEach(l => addHead(head, l, l === activeCol ? 'on' : ''));
  const body = grid.createTBody();
  for (let r = FIRST_ROW; r < FIRST_ROW + rows; r++) {
    const row = body.insertRow();
    addHead(row, r, r === activeRow ? 'rh on' : 'rh');
    letters.forEach(l => {
      const td = row.insertCell();
      if (r === activeRow && l === activeCol) td.className = 'sel';
    });
  }
}

render();
window.addEventListener('resize', render);
```
